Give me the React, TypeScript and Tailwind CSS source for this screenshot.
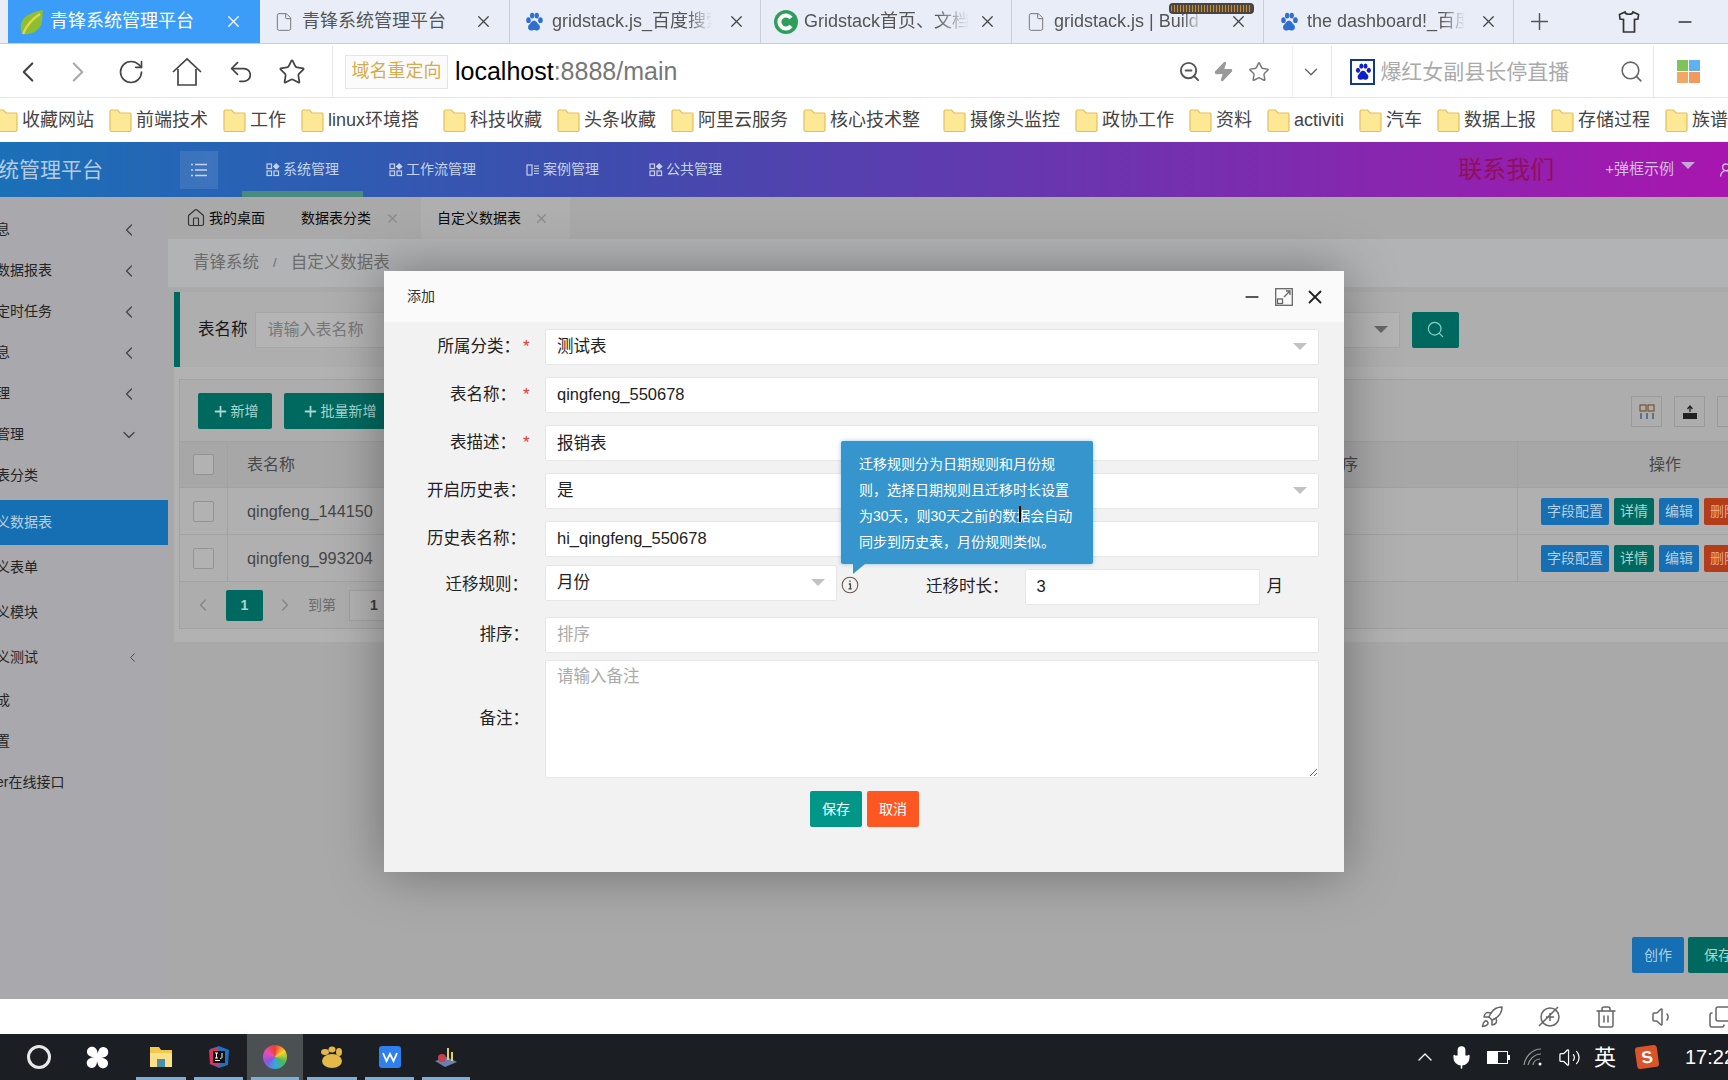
import {
  ChevronDown,
  ChevronLeft,
  ChevronRight,
  ChevronUp,
  Copy,
  File,
  House,
  Mic,
  Minus,
  Plus,
  RotateCw,
  Rocket,
  Search,
  Star,
  Trash2,
  Undo2,
  UserRound,
  Volume1,
  Volume2,
  X,
  Zap,
  ZoomOut,
} from "lucide-react";
import type { ReactNode } from "react";

const Paw = ({ size = 22, color = "#2f6fd0" }: { size?: number; color?: string }) => (
  <svg width={size} height={size} viewBox="0 0 24 24" fill={color}>
    <ellipse cx="6" cy="10" rx="2.5" ry="3.2" />
    <ellipse cx="10" cy="5" rx="2.4" ry="3.2" />
    <ellipse cx="15" cy="5" rx="2.4" ry="3.2" />
    <ellipse cx="19" cy="10" rx="2.5" ry="3.2" />
    <path d="M12 10.5c-3 0-3.6 3-5.4 4.6C4.6 17 5.4 21.500 9 21.200c1.300-.1 2-.6 3-.6s1.700.5 3 .6c3.600.3 4.400-4.200 2.400-6.100-1.800-1.600-2.400-4.600-5.400-4.600z" />
  </svg>
);

const Leaf = () => (
  <svg width="26" height="26" viewBox="0 0 26 26">
    <path d="M24 1C14 3 4 6 2 15c-1 4 0 8 2 10 9 1 18-4 19-13 .4-4 .5-8 1-11z" fill="#8fbf2f" />
    <path d="M4 25C8 15 13 10 21 5" stroke="#e3d64a" strokeWidth="2.500" fill="none" />
  </svg>
);

const GreenC = () => (
  <svg width="24" height="24" viewBox="0 0 24 24">
    <circle cx="12" cy="12" r="12" fill="#2f9e5b" />
    <path d="M17 8a6.500 6.500 0 1 0 0 8" stroke="#fff" strokeWidth="4" fill="none" />
  </svg>
);

const Folder = () => (
  <svg width="23" height="25" viewBox="0 0 23 25" className="shrink-0">
    <path d="M1 3.500Q1 2 2.500 2h6l2.500 3h10.500Q22 5 22 6.500V22q0 1.500-1.500 1.500h-18Q1 23.500 1 22z" fill="#fde896" stroke="#e2bf5d" strokeWidth="1.200" />
  </svg>
);

const NavGrid = () => (
  <svg width="14" height="14" viewBox="0 0 14 14" fill="none" stroke="#c5cfe8" strokeWidth="1.200">
    <rect x="1" y="1" width="4.500" height="4.500" />
    <rect x="1" y="8" width="4.500" height="4.500" />
    <rect x="8" y="8" width="4.500" height="4.500" />
    <path d="M10.200 .8l2.600 2.600-2.600 2.600-2.600-2.600z" fill="#c5cfe8" />
  </svg>
);

const NavBook = () => (
  <svg width="14" height="14" viewBox="0 0 14 14" fill="none" stroke="#c5cfe8" strokeWidth="1.200">
    <rect x="1" y="2" width="5" height="10" />
    <path d="M8 3h5M8 5.500h5M8 8h5M8 10.500h5" />
  </svg>
);

type TabProps = {
  icon: ReactNode;
  title: string;
  titleClass: string;
  padClass: string;
  widthClass: string;
};

const BrowserTab = ({ icon, title, titleClass, padClass, widthClass }: TabProps) => (
  <div className={`flex items-center border-r border-[#c9cdd8] ${padClass} ${widthClass}`}>
    <div className="flex w-[24px] shrink-0 justify-center">{icon}</div>
    <span className={`ml-[6px] overflow-hidden whitespace-nowrap text-[18px] text-[#555] ${titleClass}`}>{title}</span>
    <X size={19} strokeWidth={1.6} className="ml-auto shrink-0 text-[#444]" />
  </div>
);

const TabBar = () => (
  <div className="relative flex h-[44px] shrink-0 border-b border-[#c9cdd8] bg-[#e9edf8] pl-[8px]">
    <div className="flex w-[252px] items-center bg-[#3c9df8] pl-[11px] pr-[17px]">
      <Leaf />
      <span className="ml-[5px] whitespace-nowrap text-[18px] text-white">青锋系统管理平台</span>
      <X size={19} strokeWidth={1.6} className="ml-auto text-white" />
    </div>
    <BrowserTab widthClass="w-[250px]" padClass="pl-[12px] pr-[16px]" icon={<File size={20} strokeWidth={1.2} className="text-[#777]" />} title="青锋系统管理平台" titleClass="" />
    <BrowserTab widthClass="w-[251px]" padClass="pl-[12px] pr-[14px]" icon={<Paw />} title="gridstack.js_百度搜索" titleClass="w-[160px] [mask-image:linear-gradient(to_right,black_85%,transparent)]" />
    <BrowserTab widthClass="w-[251px]" padClass="pl-[13px] pr-[14px]" icon={<GreenC />} title="Gridstack首页、文档和下载" titleClass="w-[165px] [mask-image:linear-gradient(to_right,black_80%,transparent)]" />
    <BrowserTab widthClass="w-[252px]" padClass="pl-[12px] pr-[15px]" icon={<File size={20} strokeWidth={1.2} className="text-[#777]" />} title="gridstack.js | Build interactive" titleClass="w-[150px] [mask-image:linear-gradient(to_right,black_85%,transparent)]" />
    <BrowserTab widthClass="w-[250px]" padClass="pl-[13px] pr-[15px]" icon={<Paw />} title="the dashboard!_百度搜索" titleClass="w-[158px] [mask-image:linear-gradient(to_right,black_85%,transparent)]" />
    <Plus size={27} strokeWidth={1.3} className="ml-[12px] self-center text-[#555]" />
    <svg width="24" height="24" viewBox="0 0 24 24" fill="none" stroke="#333" strokeWidth="1.700" className="ml-[64px] self-center">
      <path d="M8 2 2.500 4.500 3 9l3.500.5V22h11V9.500L21 9l.5-4.500L16 2c-.5 3-7.500 3-8 0z" />
    </svg>
    <Minus size={20} strokeWidth={2} className="ml-[34px] self-center text-[#333]" />
    {/* download progress pill laid over the tabs */}
    <div className="absolute left-[1169px] top-[3px] h-[11px] w-[85px] rounded-[4px] border-[2px] border-[#444] bg-[repeating-linear-gradient(90deg,#c58b3e_0px,#c58b3e_1px,#5b4a33_1px,#5b4a33_3px)]" />
  </div>
);

const AddressBar = () => (
  <div className="flex h-[54px] shrink-0 items-center border-b border-[#e6e6e6] bg-white pt-[2px] text-[#444]">
    <ChevronLeft size={34} strokeWidth={1.5} className="ml-[11px]" />
    <ChevronRight size={34} strokeWidth={1.5} className="ml-[16px] text-[#aaa]" />
    <RotateCw size={28} strokeWidth={1.4} className="ml-[22px]" />
    <svg width="32" height="30" viewBox="0 0 32 30" fill="none" stroke="#444" strokeWidth="1.700" className="ml-[26px]">
      <path d="M2 15 16 2l14 13M7 12v16h18V12" />
    </svg>
    <Undo2 size={28} strokeWidth={1.5} className="ml-[24px]" />
    <Star size={28} strokeWidth={1.5} className="ml-[23px]" />
    <div className="ml-[26px] h-full w-px bg-[#e6e6e6]" />
    <div className="ml-[12px] flex h-[34px] w-[103px] items-center justify-center border border-[#e5e5e5] bg-[#fbfbfb] text-[18px] text-[#d6ab4c]">
      域名重定向
    </div>
    <div className="ml-[7px] text-[25px] text-[#777]">
      <span className="text-black">localhost</span>:8888/main
    </div>
    <ZoomOut size={23} strokeWidth={2} className="ml-[501px] text-[#555]" />
    <Zap size={21} className="ml-[12px] fill-[#999] text-[#999]" />
    <Star size={22} strokeWidth={1.6} className="ml-[14px] text-[#777]" />
    <div className="ml-[22px] h-full w-px bg-[#eee]" />
    <ChevronDown size={22} strokeWidth={1.5} className="ml-[7px] text-[#666]" />
    <div className="ml-[9px] h-full w-px bg-[#e6e6e6]" />
    <div className="ml-[18px] flex h-[26px] w-[25px] items-center justify-center border-2 border-[#123a88] bg-white">
      <Paw size={20} color="#1020c8" />
    </div>
    <span className="ml-[5px] whitespace-nowrap text-[21px] text-[#aaa]">爆红女副县长停直播</span>
    <Search size={25} strokeWidth={1.5} className="ml-[50px] text-[#666]" />
    <div className="ml-[9px] h-full w-px bg-[#e6e6e6]" />
    <div className="ml-[23px] grid grid-cols-[11px_11px] gap-[1px]">
      <div className="h-[11px] bg-[#7dc45a]" />
      <div className="h-[11px] bg-[#5fb2ee]" />
      <div className="h-[11px] bg-[#f2a765]" />
      <div className="h-[11px] bg-[#f29a5d]" />
    </div>
  </div>
);

const bookmarks = [
  { name: "收藏网站", cls: "" },
  { name: "前端技术", cls: "" },
  { name: "工作", cls: "" },
  { name: "linux环境搭", cls: "w-[127px]" },
  { name: "科技收藏", cls: "" },
  { name: "头条收藏", cls: "" },
  { name: "阿里云服务", cls: "" },
  { name: "核心技术整", cls: "w-[125px]" },
  { name: "摄像头监控", cls: "" },
  { name: "政协工作", cls: "" },
  { name: "资料", cls: "" },
  { name: "activiti", cls: "" },
  { name: "汽车", cls: "" },
  { name: "数据上报", cls: "" },
  { name: "存储过程", cls: "" },
  { name: "族谱", cls: "" },
];

const BookmarksBar = () => (
  <div className="flex h-[44px] shrink-0 items-center gap-[15px] overflow-hidden bg-white pl-[0px] text-[18px] text-[#444]">
    {bookmarks.map((b, i) => (
      <div key={b.name} className={`flex shrink-0 items-center gap-[4px] whitespace-nowrap ${i === 0 ? "-ml-[5px]" : ""} ${b.cls}`}>
        <Folder />
        <span>{b.name}</span>
      </div>
    ))}
  </div>
);

const navItems = [
  { name: "系统管理", icon: <NavGrid />, active: true },
  { name: "工作流管理", icon: <NavGrid />, active: false },
  { name: "案例管理", icon: <NavBook />, active: false },
  { name: "公共管理", icon: <NavGrid />, active: false },
];

const TopNav = () => (
  <div className="flex h-[55px] shrink-0 items-center bg-[linear-gradient(90deg,#1a70b8_0%,#3f4cae_35%,#6a35ae_62%,#a816ae_100%)] text-[#c8d3ea]">
    <div className="-ml-[2px] w-[182px] whitespace-nowrap text-[21px] text-[#b5cbe4]">统管理平台</div>
    <div className="flex h-[38px] w-[38px] items-center justify-center bg-white/10">
      <svg width="18" height="14" viewBox="0 0 18 14" stroke="#c8d3ea" strokeWidth="1.400">
        <path d="M5 1.500h12M5 7h12M5 12.500h12M1 1.500h2M1 7h2M1 12.500h2" />
      </svg>
    </div>
    <div className="ml-[24px] flex h-full gap-[2px]">
      {navItems.map((item) => (
        <div key={item.name} className="relative flex items-center gap-[3px] px-[24px] text-[14px]">
          {item.icon}
          <span>{item.name}</span>
          {item.active && <span className="absolute inset-x-0 bottom-0 h-[6px] bg-[#4b8a7e]" />}
        </div>
      ))}
    </div>
    <div className="ml-auto whitespace-nowrap font-['Liberation_Serif','Noto_Sans_CJK_SC',serif] text-[24px] text-[#8f0f5a]">联系我们</div>
    <div className="ml-[51px] whitespace-nowrap text-[15px] text-[#d3bfe0]">+弹框示例</div>
    <div className="ml-[7px] mb-[8px] h-0 w-0 border-x-[7px] border-t-[7px] border-x-transparent border-t-[#c9a4d8]" />
    <UserRound size={16} className="ml-[23px] -mr-[6px] shrink-0 text-[#d3bfe0]" />
  </div>
);

const sideItems = [
  { name: "息", h: "h-[41px]", arrow: "left" },
  { name: "数据报表", h: "h-[41px]", arrow: "left" },
  { name: "定时任务", h: "h-[41px]", arrow: "left" },
  { name: "息", h: "h-[41px]", arrow: "left" },
  { name: "理", h: "h-[41px]", arrow: "left" },
  { name: "管理", h: "h-[41px]", arrow: "down" },
  { name: "表分类", h: "h-[41px]", arrow: "" },
  { name: "义数据表", h: "h-[45px] mt-[4px] bg-[#156fb2] text-[#b9cfe0]", arrow: "" },
  { name: "义表单", h: "h-[45px]", arrow: "" },
  { name: "义模块", h: "h-[45px]", arrow: "" },
  { name: "义测试", h: "h-[45px]", arrow: "small" },
  { name: "成", h: "h-[41px]", arrow: "" },
  { name: "置", h: "h-[41px]", arrow: "" },
  { name: "er在线接口", h: "h-[41px]", arrow: "" },
];

const Sidebar = () => (
  <div className="w-[168px] shrink-0 overflow-hidden bg-[#a9a8ac] pt-[12px] text-[14px] text-[#242424]">
    {sideItems.map((item, i) => (
      <div key={i} className={`flex items-center justify-between pr-[31px] ${item.h}`}>
        <span className="-ml-[4px] whitespace-nowrap">{item.name}</span>
        {item.arrow === "left" && <ChevronLeft size={20} strokeWidth={1.5} className="-mr-[2px] text-[#444]" />}
        {item.arrow === "down" && <ChevronDown size={20} strokeWidth={1.5} className="-mr-[2px] text-[#444]" />}
        {item.arrow === "small" && <ChevronLeft size={15} strokeWidth={1.5} className="-mr-[3px] text-[#444]" />}
      </div>
    ))}
  </div>
);

const Check = () => (
  <div className="flex items-center justify-center border-r border-[#a1a1a1]">
    <div className="h-[21px] w-[21px] rounded-[2px] border border-[#939393] bg-[#b2b2b2]" />
  </div>
);

const ActionButton = ({ label, cls }: { label: string; cls: string }) => (
  <div className={`flex h-[27px] shrink-0 items-center justify-center rounded-[2px] text-[14px] ${cls}`}>{label}</div>
);

const DataRow = ({ name }: { name: string }) => (
  <div className="grid h-[47px] grid-cols-[48px_1072px_218px_262px] border-b border-[#a1a1a1] bg-[#b0b0b0]">
    <Check />
    <div className="flex items-center pl-[19px] text-[16.3px] text-[#474747]">{name}</div>
    <div className="border-r border-[#a1a1a1]" />
    <div className="flex items-center gap-[5px] overflow-hidden pl-[23px]">
      <ActionButton label="字段配置" cls="w-[68px] bg-[#156fb2] text-[#b2d0e6]" />
      <ActionButton label="详情" cls="w-[40px] bg-[#00695f] text-[#a8d6d0]" />
      <ActionButton label="编辑" cls="w-[40px] bg-[#156fb2] text-[#b2d0e6]" />
      <ActionButton label="删除" cls="w-[40px] bg-[#b23d18] text-[#eaa68e]" />
    </div>
  </div>
);

const PageContent = () => (
  <div className="min-w-0 flex-1 overflow-hidden">
    <div className="flex h-[42px] items-center">
      <House size={20} strokeWidth={1.4} className="ml-[18px] text-[#333]" />
      <span className="ml-[3px] text-[14px] text-[#0c0c0c]">我的桌面</span>
      <span className="ml-[36px] text-[14px] text-[#0c0c0c]">数据表分类</span>
      <X size={15} className="ml-[14px] text-[#8a8a8a]" />
      <div className="ml-[21px] flex h-full w-[149px] items-center bg-[#afafaf] pl-[16px] text-[14px] text-[#0c0c0c]">
        自定义数据表
        <X size={15} className="ml-[13px] text-[#8a8a8a]" />
      </div>
    </div>
    <div className="flex h-[48px] items-start gap-[14px] bg-[#b2b3b4] pl-[25px] pt-[11px] text-[16.5px] text-[#6b6b6b]">
      <span>青锋系统</span>
      <span className="text-[13px] leading-[25px]">/</span>
      <span>自定义数据表</span>
    </div>
    <div className="ml-[6px] mt-[5px] flex h-[75px] items-center border-l-[6px] border-[#00695f] bg-[#aeaeae] pl-[18px]">
      <span className="text-[16.5px] text-[#181818]">表名称</span>
      <div className="ml-[7px] flex h-[36px] w-[1145px] items-center border border-[#a6a6a6] bg-[#b4b4b4] pl-[12px] text-[16px] text-[#777]">
        请输入表名称
        <div className="ml-auto mr-[11px] h-0 w-0 border-x-[7px] border-t-[7px] border-x-transparent border-t-[#666]" />
      </div>
      <div className="ml-[12px] flex h-[36px] w-[47px] items-center justify-center rounded-[2px] bg-[#00695f]">
        <Search size={19} strokeWidth={1.5} className="text-[#8fd0c8]" />
      </div>
    </div>
    <div className="ml-[6px] bg-[#b2b2b2] px-[5px] pb-[13px] pt-[12px]">
      <div className="w-[1600px] border border-[#a1a1a1] bg-[#adadad]">
        <div className="flex h-[61px] items-start pl-[18px] pt-[13px]">
          <div className="flex h-[36px] w-[74px] items-center justify-center gap-[2px] rounded-[2px] bg-[#00695f] text-[14px] text-[#a8d6d0]">
            <Plus size={17} strokeWidth={2.5} />
            新增
          </div>
          <div className="ml-[12px] flex h-[36px] w-[110px] items-center justify-center gap-[2px] rounded-[2px] bg-[#00695f] text-[14px] text-[#a8d6d0]">
            <Plus size={17} strokeWidth={2.5} />
            批量新增
          </div>
          <div className="ml-[1237px] mt-[3px] flex h-[31px] w-[31px] items-center justify-center border border-[#999]">
            <svg width="16" height="16" viewBox="0 0 16 16" fill="none" strokeWidth="1.200">
              <rect x="1" y="1" width="6" height="6" stroke="#7a5430" />
              <rect x="9" y="1" width="6" height="6" stroke="#7a5430" />
              <path d="M2 9v6M8 9v6M14 9v6" stroke="#2a4a7a" />
            </svg>
          </div>
          <div className="ml-[12px] mt-[3px] flex h-[31px] w-[31px] items-center justify-center border border-[#999]">
            <svg width="16" height="16" viewBox="0 0 16 16" fill="#222">
              <path d="M1 9h14v6H1z" />
              <path d="M8 8V3M5.500 5 8 2l2.500 3" stroke="#222" fill="none" strokeWidth="1.300" />
            </svg>
          </div>
          <div className="ml-[12px] mt-[3px] h-[31px] w-[31px] border border-[#999]" />
        </div>
        <div className="grid h-[47px] grid-cols-[48px_1072px_218px_262px] border-y border-[#a1a1a1] bg-[#a7a7a7] text-[16px] text-[#474747]">
          <Check />
          <div className="flex items-center pl-[19px]">表名称</div>
          <div className="flex items-center border-r border-[#a1a1a1] pl-[26px]">排序</div>
          <div className="flex items-center pl-[131px]">操作</div>
        </div>
        <DataRow name="qingfeng_144150" />
        <DataRow name="qingfeng_993204" />
        <div className="flex h-[46px] items-center pl-[13px] text-[14px] text-[#6b6b6b]">
          <ChevronLeft size={20} strokeWidth={1.5} className="text-[#858585]" />
          <div className="ml-[13px] flex h-[31px] w-[37px] items-center justify-center rounded-[2px] bg-[#00695f] font-bold text-[#a8d6d0]">1</div>
          <ChevronRight size={20} strokeWidth={1.5} className="ml-[12px] text-[#858585]" />
          <span className="ml-[13px]">到第</span>
          <div className="ml-[13px] flex h-[31px] w-[50px] items-center justify-center border border-[#a1a1a1] bg-[#b2b2b2] font-bold text-[#3c3c3c]">1</div>
        </div>
      </div>
    </div>
    <div className="mr-[-20px] mt-[295px] flex justify-end gap-[4px] pr-0">
      <ActionButtonLarge label="创作" cls="w-[52px] bg-[#156fb2] text-[#b2d0e6]" />
      <ActionButtonLarge label="保存" cls="w-[60px] bg-[#00695f] text-[#a8d6d0]" />
    </div>
  </div>
);

const ActionButtonLarge = ({ label, cls }: { label: string; cls: string }) => (
  <div className={`flex h-[36px] items-center justify-center rounded-[2px] text-[14px] ${cls}`}>{label}</div>
);

const fieldClass =
  "h-[36px] w-full rounded-[2px] border border-[#e6e6e6] bg-white pb-[2px] pl-[11px] text-[16.5px] text-[#222] outline-none placeholder:text-[#aaa]";

const Caret = () => <div className="h-0 w-0 border-x-[7px] border-t-[7px] border-x-transparent border-t-[#c2c2c2]" />;

type FormRowProps = {
  label: string;
  endClass: string;
  required?: boolean;
  children: ReactNode;
};

const FormRow = ({ label, endClass, required, children }: FormRowProps) => (
  <div className="flex">
    <div className={`relative flex w-[161px] shrink-0 items-center justify-end whitespace-nowrap pb-[2px] text-[16.5px] text-[#222] ${endClass}`}>
      {label}
      {required && <span className="absolute left-[139px] top-[5px] text-[17px] text-[#e0353b]">*</span>}
    </div>
    <div className="w-[774px]">{children}</div>
  </div>
);

const SelectBox = ({ value, cls = "w-full" }: { value: string; cls?: string }) => (
  <div className={`flex h-[36px] items-center justify-between rounded-[2px] border border-[#e6e6e6] bg-white pb-[2px] pl-[11px] pr-[11px] text-[16.5px] text-[#222] ${cls}`}>
    <span>{value}</span>
    <Caret />
  </div>
);

const Modal = () => (
  <div className="absolute left-[384px] top-[74px] h-[601px] w-[960px] bg-[#f2f2f2] shadow-[0_0_50px_rgba(0,0,0,0.35)]">
    <div className="flex h-[51px] items-center bg-[#fafafa] pl-[23px] pr-[18px] text-[14px] text-[#333]">
      <span>添加</span>
      <Minus size={20} strokeWidth={2} className="ml-auto text-[#222]" />
      <svg width="18" height="18" viewBox="0 0 18 18" fill="none" stroke="#666" strokeWidth="1.300" className="ml-[13px]">
        <rect x=".7" y=".7" width="16.600" height="16.600" />
        <rect x="2.500" y="11" width="5" height="4.500" />
        <path d="M9 9l6-6M11 3h4v4" />
      </svg>
      <X size={22} strokeWidth={2} className="ml-[11px] text-[#222]" />
    </div>
    <div className="flex flex-col pt-[7px]">
      <div className="flex flex-col gap-[12px]">
        <FormRow label="所属分类：" endClass="pr-[25px]" required>
          <SelectBox value="测试表" />
        </FormRow>
        <FormRow label="表名称：" endClass="pr-[29px]" required>
          <input readOnly value="qingfeng_550678" className={fieldClass} />
        </FormRow>
        <FormRow label="表描述：" endClass="pr-[29px]" required>
          <input readOnly value="报销表" className={fieldClass} />
        </FormRow>
        <FormRow label="开启历史表：" endClass="pr-[19px]">
          <SelectBox value="是" />
        </FormRow>
        <FormRow label="历史表名称：" endClass="pr-[19px]">
          <input readOnly value="hi_qingfeng_550678" className={fieldClass} />
        </FormRow>
      </div>
      <div className="mt-[8px]">
        <FormRow label="迁移规则：" endClass="pr-[17px]">
          <div className="flex h-[40px] items-start">
            <SelectBox value="月份" cls="w-[292px]" />
            <svg width="18" height="18" viewBox="0 0 18 18" className="ml-[4px] mt-[11px]">
              <circle cx="9" cy="9" r="7.800" fill="none" stroke="#6b5a50" strokeWidth="1.100" />
              <path d="M9 4.500v1.500M7.800 8h1.600v4.500M7.500 12.800h3.200" stroke="#444" strokeWidth="1.300" fill="none" />
            </svg>
            <span className="ml-[67px] mt-[4px] flex h-[36px] items-center whitespace-nowrap pb-[2px] text-[16.5px] text-[#222]">迁移时长：</span>
            <input readOnly value="3" className={`${fieldClass} ml-[16px] mt-[4px] !w-[235px]`} />
            <span className="ml-[7px] mt-[4px] flex h-[36px] items-center pb-[2px] text-[16.5px] text-[#222]">月</span>
          </div>
        </FormRow>
      </div>
      <div className="mt-[12px]">
        <FormRow label="排序：" endClass="pr-[16px]">
          <input readOnly placeholder="排序" className={fieldClass} />
        </FormRow>
      </div>
      <div className="mt-[7px]">
        <FormRow label="备注：" endClass="pr-[16px]">
          <textarea
            readOnly
            placeholder="请输入备注"
            className="block h-[118px] w-full rounded-[2px] border border-[#e6e6e6] bg-white px-[11px] py-[3px] text-[16.5px] outline-none placeholder:text-[#aaa]"
          />
        </FormRow>
      </div>
      <div className="mt-[13px] flex gap-[5px] pl-[426px] text-[14px] text-white">
        <div className="flex h-[36px] w-[52px] items-center justify-center rounded-[2px] bg-[#009688]">保存</div>
        <div className="flex h-[36px] w-[52px] items-center justify-center rounded-[2px] bg-[#ff5722]">取消</div>
      </div>
    </div>
    {/* tooltip over the form */}
    <div className="absolute left-[457px] top-[170px] h-[123px] w-[252px] rounded-[2px] bg-[#3595cc] pl-[18px] pt-[10px] text-[14px] leading-[26px] text-white shadow-[0_0_4px_rgba(53,149,204,0.5)]">
      <div className="whitespace-nowrap">迁移规则分为日期规则和月份规</div>
      <div className="whitespace-nowrap">则，选择日期规则且迁移时长设置</div>
      <div className="whitespace-nowrap">为30天，则30天之前的数据会自动</div>
      <div className="whitespace-nowrap">同步到历史表，月份规则类似。</div>
      <div className="absolute left-[12px] top-full h-0 w-0 border-l-[12px] border-t-[10px] border-l-transparent border-t-[#3595cc] [transform:scaleX(-1)]" />
      {/* mouse cursor */}
      <div className="absolute left-[178px] top-[65px] h-[16px] w-[2px] bg-black" />
    </div>
  </div>
);

const StatusBar = () => (
  <div className="flex h-[35px] shrink-0 items-center justify-end gap-[33px] bg-white pr-0 text-[#666]">
    <Rocket size={24} strokeWidth={1.5} />
    <svg width="24" height="24" viewBox="0 0 24 24" fill="none" stroke="#666" strokeWidth="1.500">
      <circle cx="13" cy="12" r="9" />
      <path d="M13 8v8M9 12h8M2 21 21 2" />
    </svg>
    <Trash2 size={24} strokeWidth={1.5} />
    <Volume1 size={24} strokeWidth={1.5} />
    <Copy size={24} strokeWidth={1.5} className="-mr-[4px] -scale-y-100" />
  </div>
);

const TaskSlot = ({ children, cls, active }: { children: ReactNode; cls: string; active?: boolean }) => (
  <div className={`relative flex h-full items-center justify-center ${cls} ${active ? "bg-[#4b5052]" : ""}`}>
    {children}
    <span className="absolute inset-x-[4px] bottom-0 h-[3px] bg-[#7eaed6]" />
  </div>
);

const Taskbar = () => (
  <div className="flex h-[46px] shrink-0 items-center overflow-hidden bg-[#1b1f23] pl-[10px] text-white">
    <div className="flex w-[58px] justify-center">
      <div className="h-[24px] w-[24px] rounded-full border-[3px] border-[#e8e8e8]" />
    </div>
    <div className="flex w-[58px] justify-center">
      <svg width="23" height="23" viewBox="0 0 24 24" fill="#fff">
        <path d="M12 12C5 12 1 10 1 6s4-6 7-5 5 5 4 11zM12 12c0-7 2-11 6-11s6 4 5 7-5 5-11 4zM12 12c7 0 11 2 11 6s-4 6-7 5-5-5-4-11zM12 12c0 7-2 11-6 11s-6-4-5-7 5-5 11-4z" />
      </svg>
    </div>
    <TaskSlot cls="ml-[6px] w-[58px]">
      <svg width="24" height="22" viewBox="0 0 24 22">
        <path d="M1 1h9l2 3h11v17H1z" fill="#f2c94f" />
        <path d="M1 7h22v14H1z" fill="#fbe08a" />
        <path d="M8 21v-8h8v8z" fill="#4b8fa8" />
      </svg>
    </TaskSlot>
    <TaskSlot cls="w-[57px]">
      <svg width="24" height="24" viewBox="0 0 24 24">
        <path d="M3 4l9-3 10 4-1 15-9 3-9-4z" fill="#1f6fc4" />
        <path d="M2 5l9-3 2 20-10-3z" fill="#d8345f" />
        <rect x="6" y="6" width="12" height="12" fill="#111" />
        <rect x="8" y="15" width="5" height="1" fill="#fff" />
        <path d="M8 8h3M9.500 8v5M8 13h3M15 8v4.500q0 1-2 .8" stroke="#fff" fill="none" strokeWidth="1" />
      </svg>
    </TaskSlot>
    <TaskSlot cls="w-[56px]" active>
      <div className="h-[24px] w-[24px] rounded-full bg-[conic-gradient(#e8402f,#f7d32d,#46b85a,#33a8e0,#8a55e0,#e84fb0,#e8402f)]" />
    </TaskSlot>
    <TaskSlot cls="w-[58px]">
      <svg width="24" height="22" viewBox="0 0 24 22" fill="#e4b94a">
        <ellipse cx="12" cy="15" rx="10" ry="7" />
        <ellipse cx="5" cy="6" rx="4" ry="3" />
        <ellipse cx="12" cy="3.500" rx="3.500" ry="3" />
        <ellipse cx="19" cy="6" rx="3" ry="4" />
      </svg>
    </TaskSlot>
    <TaskSlot cls="w-[57px]">
      <div className="flex h-[22px] w-[22px] items-center justify-center rounded-[3px] bg-[#2f80ea]">
        <svg width="16" height="12" viewBox="0 0 16 12" fill="none" stroke="#fff" strokeWidth="1.800">
          <path d="M1 2l3.500 8L8 3l3.500 7L15 2" />
        </svg>
      </div>
    </TaskSlot>
    <TaskSlot cls="w-[56px]">
      <svg width="24" height="24" viewBox="0 0 24 24">
        <path d="M1 16l12-4 10 5-12 5z" fill="#6a7fb0" />
        <circle cx="8" cy="13" r="4" fill="#c9424a" />
        <path d="M13 3h2v12h-2zM17 7h2v9h-2z" fill="#e3cf6a" />
      </svg>
    </TaskSlot>
    <div className="ml-auto flex h-full items-center">
      <div className="flex w-[36px] justify-center"><ChevronUp size={24} strokeWidth={1.4} /></div>
      <div className="flex w-[36px] justify-center"><Mic size={25} strokeWidth={1.5} className="fill-white" /></div>
      <div className="flex w-[36px] justify-center">
        <div className="relative h-[13px] w-[21px] border border-white">
          <div className="h-full w-[10px] bg-white" />
          <div className="absolute -right-[3px] top-[3px] h-[5px] w-[2px] bg-white" />
        </div>
      </div>
      <div className="flex w-[36px] justify-center">
        <svg width="20" height="20" viewBox="0 0 20 20" fill="none" stroke="#999" strokeWidth="1.200">
          <path d="M1 18C2 10 9 2 18 2M5 18c1-5 6-11 13-11M10 18c.5-3 3-6 7-6" />
          <circle cx="17" cy="17" r="1.500" fill="#fff" stroke="none" />
        </svg>
      </div>
      <div className="flex w-[36px] justify-center"><Volume2 size={23} strokeWidth={1.3} /></div>
      <div className="flex w-[36px] justify-center text-[22px]">英</div>
      <div className="ml-[2px] flex w-[44px] justify-center">
        <div className="flex h-[22px] w-[22px] rotate-[-8deg] items-center justify-center rounded-[3px] bg-[#d9542b] text-[17px] font-bold leading-none">S</div>
      </div>
      <div className="ml-[16px] w-[43px] overflow-hidden whitespace-nowrap text-[20px]">17:22</div>
    </div>
  </div>
);

const App = () => (
  <div className="flex h-[1080px] w-[1728px] flex-col overflow-hidden bg-white font-['Liberation_Sans','Noto_Sans_CJK_SC',sans-serif]">
    <TabBar />
    <AddressBar />
    <BookmarksBar />
    <TopNav />
    <div className="relative flex h-[802px] shrink-0 overflow-hidden bg-[#a9a9a9]">
      <Sidebar />
      <PageContent />
      <Modal />
    </div>
    <StatusBar />
    <Taskbar />
  </div>
);

export default App;
